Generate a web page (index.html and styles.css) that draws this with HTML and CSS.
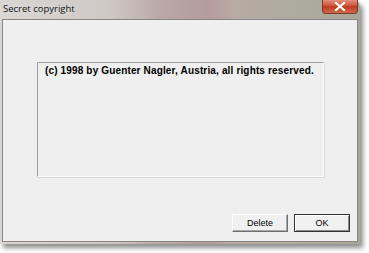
FILE: index.html
```html
<!DOCTYPE html>
<html>
<head>
<meta charset="utf-8">
<link rel="stylesheet" href="styles.css">
</head>
<body>
<div class="window">
  <div class="titlebar">
    <span class="title">Secret copyright</span>
    <button class="close" aria-label="Close">
      <svg width="12" height="9" viewBox="0 0 12 9"><path d="M2 1 L10 8 M10 1 L2 8" stroke="#fff" stroke-width="2.2" stroke-linecap="square"/></svg>
    </button>
  </div>
  <div class="client">
    <div class="panel">
      <p class="notice">(c) 1998 by Guenter Nagler, Austria, all rights reserved.</p>
    </div>
    <div class="buttons">
      <button class="btn">Delete</button>
      <button class="btn default">OK</button>
    </div>
  </div>
</div>
</body>
</html>
```
FILE: styles.css
```css
html, body {
  margin: 0;
  padding: 0;
  background: #ffffff;
}
body {
  width: 369px;
  height: 253px;
  overflow: hidden;
}
.window {
  width: 360px;
  height: 244px;
  display: flex;
  flex-direction: column;
  background: linear-gradient(90deg, #d9d6d3 0%, #cfc9c6 30%, #b9a8a6 45%, #b59c9c 58%, #b8aaa4 65%, #aeab9f 80%, #a9a79a 100%);
  box-shadow: 3px 4px 5px rgba(0,0,0,0.45);
  border-radius: 0 6px 0 0;
}
.titlebar {
  height: 19px;
  position: relative;
  display: flex;
  align-items: center;
}
.title {
  font-family: "Open Sans", "Noto Sans", sans-serif;
  font-size: 9.5px;
  color: #111;
  padding-left: 3px;
  margin-top: -3px;
  text-shadow: 0 0 6px rgba(255,255,255,0.7);
}
.close {
  position: absolute;
  right: 2px;
  top: -1px;
  width: 36px;
  height: 15px;
  border: 1px solid #7a3a2e;
  border-top: none;
  border-radius: 0 0 4px 4px;
  background: linear-gradient(180deg, #e79a86 0%, #d2573e 45%, #be3a1f 55%, #cf6a4c 100%);
  display: flex;
  align-items: center;
  justify-content: center;
  padding: 0;
}
.client {
  flex: 1;
  margin: 0 2px 2px 2px;
  background: #efefef;
  border: 1px solid #8a8585;
  display: flex;
  flex-direction: column;
  padding: 42px 33px 9px 34px;
}
.panel {
  height: 113px;
  border-top: 1px solid #a0a0a0;
  border-left: 1px solid #a0a0a0;
  border-right: 1px solid #ffffff;
  border-bottom: 1px solid #ffffff;
  box-shadow: 1px 1px 0 #d8d8d8;
}
.notice {
  margin: 2px 0 0 7px;
  font-family: "Liberation Sans", Arial, sans-serif;
  font-weight: bold;
  font-size: 10px;
  letter-spacing: 0.15px;
  color: #000;
  white-space: nowrap;
}
.buttons {
  margin-top: auto;
  display: flex;
  justify-content: flex-end;
  gap: 6px;
  margin-right: -26px;
}
.btn {
  width: 56px;
  height: 18px;
  padding: 0;
  font-family: "Liberation Sans", Arial, sans-serif;
  font-size: 9px;
  color: #000;
  background: #f0f0f0;
  border: 1px solid;
  border-color: #ffffff #6e6e6e #6e6e6e #ffffff;
  box-shadow: inset -1px -1px 0 #a8a8a8;
}
.btn.default {
  border: 1px solid #333;
  box-shadow: inset 1px 1px 0 #fff, inset -1px -1px 0 #8a8a8a;
}
```
